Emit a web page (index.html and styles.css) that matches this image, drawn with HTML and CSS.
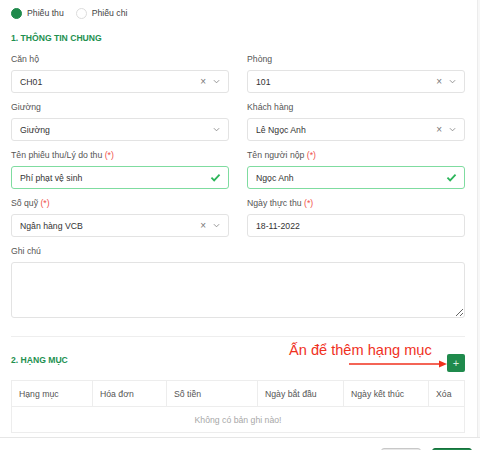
FILE: index.html
```html
<!DOCTYPE html>
<html lang="vi">
<head>
<meta charset="utf-8">
<link rel="stylesheet" href="styles.css">
</head>
<body>
<div class="frame">
  <div class="main">
    <div class="radios">
      <label class="radio"><span class="dot on"></span>Phiếu thu</label>
      <label class="radio"><span class="dot"></span>Phiếu chi</label>
    </div>
    <div class="heading h1">1. THÔNG TIN CHUNG</div>
    <div class="grid">
      <div class="field">
        <div class="label">Căn hộ</div>
        <div class="input"><span class="val">CH01</span><span class="icons"><span class="x">×</span><svg class="chev" viewBox="0 0 8 5"><path d="M1 1l3 3 3-3"/></svg></span></div>
      </div>
      <div class="field">
        <div class="label">Phòng</div>
        <div class="input"><span class="val">101</span><span class="icons"><span class="x">×</span><svg class="chev" viewBox="0 0 8 5"><path d="M1 1l3 3 3-3"/></svg></span></div>
      </div>
      <div class="field">
        <div class="label">Giường</div>
        <div class="input"><span class="val">Giường</span><span class="icons"><svg class="chev" viewBox="0 0 8 5"><path d="M1 1l3 3 3-3"/></svg></span></div>
      </div>
      <div class="field">
        <div class="label">Khách hàng</div>
        <div class="input"><span class="val">Lê Ngọc Anh</span><span class="icons"><span class="x">×</span><svg class="chev" viewBox="0 0 8 5"><path d="M1 1l3 3 3-3"/></svg></span></div>
      </div>
      <div class="field">
        <div class="label">Tên phiếu thu/Lý do thu <span class="req">(*)</span></div>
        <div class="input valid"><span class="val">Phí phạt vệ sinh</span><svg class="check" viewBox="0 0 12 10"><path d="M1.5 5.2l3 3 6-6.5"/></svg></div>
      </div>
      <div class="field">
        <div class="label">Tên người nộp <span class="req">(*)</span></div>
        <div class="input valid"><span class="val">Ngọc Anh</span><svg class="check" viewBox="0 0 12 10"><path d="M1.5 5.2l3 3 6-6.5"/></svg></div>
      </div>
      <div class="field">
        <div class="label">Số quỹ <span class="req">(*)</span></div>
        <div class="input"><span class="val">Ngân hàng VCB</span><span class="icons"><span class="x">×</span><svg class="chev" viewBox="0 0 8 5"><path d="M1 1l3 3 3-3"/></svg></span></div>
      </div>
      <div class="field">
        <div class="label">Ngày thực thu <span class="req">(*)</span></div>
        <div class="input"><span class="val">18-11-2022</span></div>
      </div>
      <div class="field wide">
        <div class="label">Ghi chú</div>
        <textarea class="textarea"></textarea>
      </div>
    </div>
    <div class="divider"></div>
    <div class="section2">
      <div class="heading">2. HẠNG MỤC</div>
      <div class="note">Ấn để thêm hạng mục</div>
      <svg class="arrow" viewBox="0 0 98 8"><path d="M0 4h92" stroke="#f0311e" stroke-width="1.6"/><path d="M90 0.5L98 4 90 7.5z" fill="#f0311e"/></svg>
      <button class="add">+</button>
    </div>
    <table class="tbl">
      <colgroup><col class="c1"><col class="c2"><col class="c3"><col class="c4"><col class="c5"><col></colgroup>
      <thead>
        <tr><th>Hạng mục</th><th>Hóa đơn</th><th>Số tiền</th><th>Ngày bắt đầu</th><th>Ngày kết thúc</th><th>Xóa</th></tr>
      </thead>
      <tbody>
        <tr><td colspan="6" class="empty">Không có bản ghi nào!</td></tr>
      </tbody>
    </table>
  </div>
  <div class="scroll"></div>
</div>
<div class="footer">
  <button class="btn gray"></button>
  <button class="btn green"></button>
</div>
</body>
</html>
```
FILE: styles.css
```css
html, body {
  margin: 0;
  padding: 0;
  background: #fff;
  font-family: "Liberation Sans", Arial, sans-serif;
  font-size: 8.7px;
  color: #333;
}
body {
  height: 450px;
  overflow: hidden;
}
.frame {
  display: flex;
  height: 437px;
  overflow: hidden;
}
.main {
  width: 454px;
  padding: 0 12px 0 11px;
  flex: none;
}
.scroll {
  flex: 1;
  border-left: 1px solid #ececec;
  background: #f7f7f7;
}
.radios {
  display: flex;
  align-items: center;
  height: 14px;
  margin-top: 6px;
  color: #444;
}
.radio {
  display: flex;
  align-items: center;
  gap: 5px;
  margin-right: 12px;
}
.dot {
  width: 11px;
  height: 11px;
  border-radius: 50%;
  box-sizing: border-box;
  border: 1px solid #dcdcdc;
  background: #fff;
}
.dot.on {
  background: #1f8a4c;
  border-color: #1f8a4c;
}
.heading {
  color: #22904f;
  font-weight: bold;
  font-size: 8.6px;
  line-height: 12px;
}
.h1 {
  margin-top: 12px;
}
.grid {
  display: grid;
  grid-template-columns: 218px 218px;
  column-gap: 18px;
  row-gap: 7px;
  margin-top: 8px;
}
.field.wide {
  grid-column: 1 / 3;
}
.label {
  height: 14px;
  line-height: 14px;
  margin-bottom: 4px;
  color: #555;
}
.req {
  color: #f0504a;
}
.input {
  height: 23px;
  box-sizing: border-box;
  border: 1px solid #e3e3e3;
  border-radius: 3px;
  display: flex;
  align-items: center;
  justify-content: space-between;
  padding: 0 8px 0 8px;
  color: #333;
}
.input.valid {
  border-color: #7fdca0;
}
.icons {
  display: flex;
  align-items: center;
  gap: 7px;
}
.x {
  color: #777;
  font-size: 10px;
  line-height: 10px;
}
.chev {
  width: 7px;
  height: 5px;
  fill: none;
  stroke: #888;
  stroke-width: 1;
}
.check {
  width: 11px;
  height: 9px;
  fill: none;
  stroke: #2cb55a;
  stroke-width: 2;
  margin-right: -1px;
}
.textarea {
  display: block;
  width: 100%;
  height: 56px;
  box-sizing: border-box;
  border: 1px solid #e3e3e3;
  border-radius: 3px;
  margin: 0;
  font: inherit;
  resize: vertical;
  outline: none;
}
.divider {
  height: 1px;
  background: #eeeeee;
  margin-top: 18px;
}
.section2 {
  position: relative;
  display: flex;
  justify-content: space-between;
  align-items: flex-start;
  margin-top: 17px;
  height: 18px;
}
.note {
  position: absolute;
  left: 278px;
  top: -13px;
  color: #f0311e;
  font-size: 14.6px;
  line-height: 18px;
  white-space: nowrap;
}
.arrow {
  position: absolute;
  left: 338px;
  top: 6px;
  width: 98px;
  height: 8px;
}
.add {
  width: 18px;
  height: 18px;
  padding: 0;
  border: none;
  border-radius: 2px;
  background: #1f8a4c;
  color: #d8efe0;
  font-family: "Liberation Sans", Arial, sans-serif;
  font-size: 11px;
  line-height: 18px;
}
.tbl {
  width: 454px;
  margin-top: 8px;
  border-collapse: collapse;
  table-layout: fixed;
  color: #555;
}
.c1 { width: 81px; }
.c2 { width: 74px; }
.c3 { width: 91px; }
.c4 { width: 86px; }
.c5 { width: 85px; }
.tbl th, .tbl td {
  border: 1px solid #ededed;
  height: 25px;
  padding: 0 0 0 7px;
  text-align: left;
  font-weight: normal;
}
.tbl td.empty {
  text-align: center;
  padding: 0;
  color: #a8a8a8;
}
.footer {
  border-top: 1px solid #e6e6e6;
  display: flex;
  justify-content: flex-end;
  gap: 11px;
  padding: 10px 8px 0 0;
  height: 2px;
  overflow: hidden;
}
.btn {
  width: 40px;
  height: 28px;
  border-radius: 3px;
  padding: 0;
  flex: none;
}
.btn.gray {
  background: #e8e8e8;
  border: 1px solid #c8c8c8;
}
.btn.green {
  background: #1f8a4c;
  border: 1px solid #17703c;
}
```
